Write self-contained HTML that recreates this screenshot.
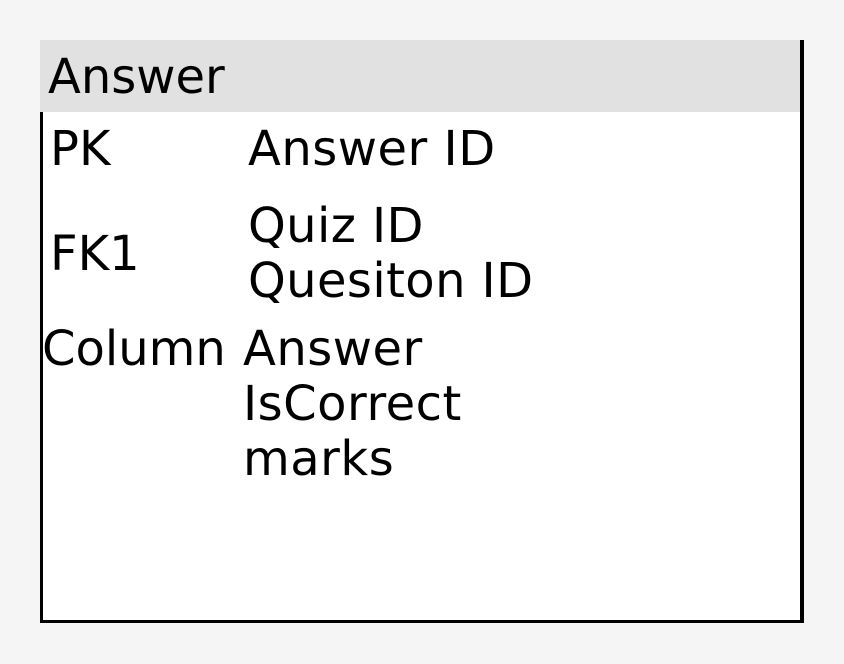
<!DOCTYPE html>
<html><head><style>
body{margin:0;width:844px;height:664px;background:#f5f5f5;position:relative;overflow:hidden;font-family:"DejaVu Sans","Liberation Sans",sans-serif;font-size:48px;line-height:55px;color:#000}
.t{position:absolute;white-space:nowrap}
</style></head><body>
<div style="position:absolute;left:40px;top:40px;width:760px;height:580px;background:#fff;border-right:4px solid #000;border-bottom:3px solid #000"></div>
<div style="position:absolute;left:40px;top:40px;width:760px;height:72px;background:#e1e1e1"></div>
<div style="position:absolute;left:40px;top:112px;width:3px;height:511px;background:#000"></div>
<div class="t" style="left:48px;top:50px">Answer</div>
<div class="t" style="left:50px;top:122px">PK</div>
<div class="t" style="left:248px;top:122px;letter-spacing:0.5px">Answer ID</div>
<div class="t" style="left:50px;top:227px">FK1</div>
<div class="t" style="left:248px;top:199px;letter-spacing:0.4px">Quiz ID<br>Quesiton ID</div>
<div class="t" style="left:42px;top:322px">Column</div>
<div class="t" style="left:243px;top:322px;letter-spacing:0.5px">Answer<br>IsCorrect<br>marks</div>
</body></html>
